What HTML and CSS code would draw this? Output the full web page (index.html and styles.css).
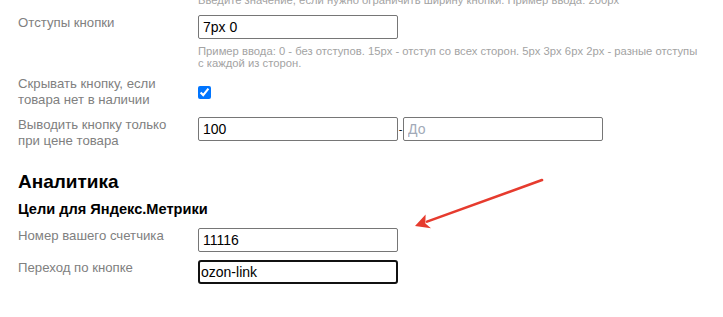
FILE: index.html
```html
<!DOCTYPE html>
<html>
<head>
<meta charset="utf-8">
<title>Настройки кнопки</title>
<link rel="stylesheet" href="styles.css">
</head>
<body>
<div class="settings">
	<div class="row row-cut">
		<div class="label"></div>
		<div class="field">
			<p class="hint">Введите значение, если нужно ограничить ширину кнопки. Пример ввода: 200px</p>
		</div>
	</div>

	<div class="row row-padding">
		<div class="label">Отступы кнопки</div>
		<div class="field">
			<input class="text" type="text" value="7px 0">
			<p class="hint hint-below">Пример ввода: 0 - без отступов. 15px - отступ со всех сторон. 5px 3px 6px 2px - разные отступы<br>с каждой из сторон.</p>
		</div>
	</div>

	<div class="row row-check">
		<div class="label">Скрывать кнопку, если товара нет в наличии</div>
		<div class="field">
			<input class="check" type="checkbox" checked>
		</div>
	</div>

	<div class="row row-price">
		<div class="label">Выводить кнопку только при цене товара</div>
		<div class="field range">
			<input class="text" type="text" value="100">
			<span class="dash">-</span>
			<input class="text" type="text" placeholder="До">
		</div>
	</div>

	<h2 class="section-title">Аналитика</h2>
	<h3 class="section-sub">Цели для Яндекс.Метрики</h3>

	<div class="row row-counter">
		<div class="label">Номер вашего счетчика</div>
		<div class="field">
			<input class="text" type="text" value="11116">
		</div>
	</div>

	<div class="row row-goal">
		<div class="label">Переход по кнопке</div>
		<div class="field">
			<input class="text is-focused" type="text" value="ozon-link">
		</div>
	</div>

	<svg class="pointer" width="723" height="317" viewBox="0 0 723 317">
		<line x1="542" y1="186" x2="427" y2="227.6" stroke="#e63b2e" stroke-width="2.6" stroke-linecap="round"/>
		<polygon points="415,232 425.6,220.4 425.4,229.4 431,234.2" fill="#e63b2e"/>
	</svg>
</div>
</body>
</html>
```

FILE: styles.css
```css
html, body {
	margin: 0;
	padding: 0;
	background: #ffffff;
}

body {
	font-family: "Liberation Sans", Arial, sans-serif;
	font-size: 14px;
	color: #000000;
	overflow: hidden;
}

.settings {
	position: relative;
	padding-left: 18px;
	height: 317px;
}

.row {
	display: grid;
	grid-template-columns: 180px 1fr;
	align-items: start;
}

.label {
	padding-right: 10px;
	font-size: 13.2px;
	line-height: 16px;
	color: #808080;
}

.hint {
	margin: 0;
	font-size: 11.25px;
	line-height: 12px;
	white-space: nowrap;
	color: #a3a3a3;
}

.hint-below { margin-top: 6px; }

.row-cut { margin-top: -6px; }
.row-padding { margin-top: 9px; }
.row-check { margin-top: 7px; align-items: center; }
.row-price { margin-top: 9px; }
.row-counter { margin-top: 11px; }
.row-goal { margin-top: 8px; }

.text {
	box-sizing: border-box;
	display: block;
	width: 200px;
	height: 24px;
	margin: 0;
	padding: 0 4px;
	border: 1px solid #767676;
	border-radius: 2px;
	font-family: "Liberation Sans", Arial, sans-serif;
	font-size: 14px;
	color: #000000;
	background: #ffffff;
}

.text::placeholder { color: #a2aab8; }

.text.is-focused {
	border: 2px solid #111111;
	border-radius: 3px;
	padding-left: 1px;
}

.check {
	display: block;
	width: 13px;
	height: 13px;
	margin: 0;
	accent-color: #0075ff;
}

.range {
	display: flex;
	align-items: center;
}

.dash {
	flex: none;
	width: 5px;
	text-align: center;
	font-size: 11px;
	line-height: 11px;
}

.section-title {
	margin: 21px 0 0;
	font-size: 19px;
	line-height: 23px;
	font-weight: bold;
}

.section-sub {
	margin: 8px 0 0;
	font-size: 14.6px;
	line-height: 16px;
	font-weight: bold;
}

.pointer {
	position: absolute;
	left: 0;
	top: 0;
	pointer-events: none;
}
```
